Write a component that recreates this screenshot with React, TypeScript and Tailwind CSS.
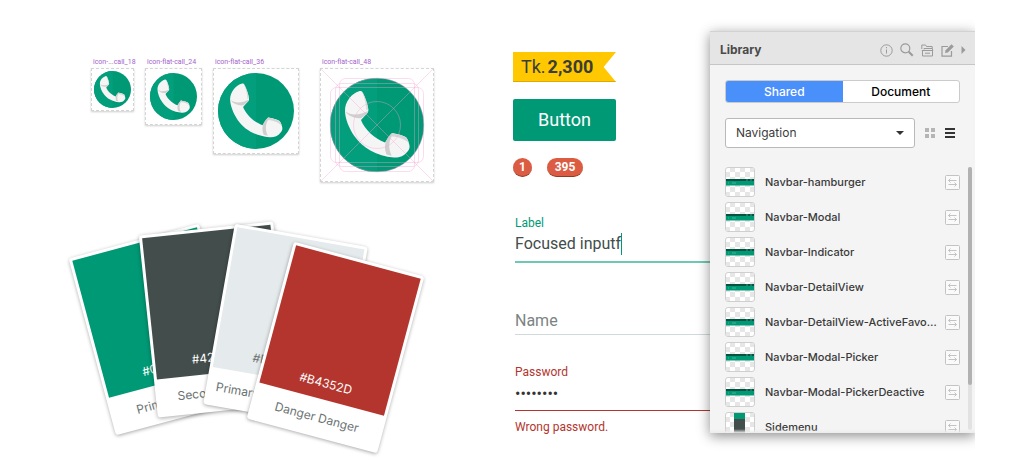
import { useState } from "react";
import clsx from "clsx";

type Artboard = {
  label: string;
  box: string;
  inset: string;
  guides?: boolean;
};

const ARTBOARDS: Artboard[] = [
  { label: "icon-...call_18", box: "w-[43px] h-[43px]", inset: "p-0.5" },
  { label: "icon-flat-call_24", box: "w-[57px] h-[57px]", inset: "p-1" },
  { label: "icon-flat-call_36", box: "w-[86px] h-[86px]", inset: "p-1" },
  { label: "icon-flat-call_48", box: "w-[114px] h-[114px]", inset: "p-[9px]", guides: true },
];

const SWATCHES = [
  { hex: "#009975", name: "Primary Green", place: "left-[22px] top-4 -rotate-15", fill: "bg-[#009975] text-white" },
  { hex: "#424D4C", name: "Secondary Grey", place: "left-20 top-1.5 -rotate-6", fill: "bg-[#424d4c] text-white" },
  { hex: "#E5EAED", name: "Primary Background", place: "left-[150px] top-3 rotate-10", fill: "bg-[#e5eaed] text-[#6b7372]" },
  { hex: "#B4352D", name: "Danger Danger", place: "left-[200px] top-[34px] rotate-15", fill: "bg-[#b4352d] text-white" },
];

const SYMBOLS = [
  "Navbar-hamburger",
  "Navbar-Modal",
  "Navbar-Indicator",
  "Navbar-DetailView",
  "Navbar-DetailView-ActiveFavorite",
  "Navbar-Modal-Picker",
  "Navbar-Modal-PickerDeactive",
  "Sidemenu",
];

function CallIcon() {
  return (
    <svg viewBox="0 0 94 94" className="block h-full w-full">
      <circle cx="47" cy="47" r="47" fill="#009975" />
      <path d="M47 0a47 47 0 0 0 0 94z" fill="#039f7c" />
      <g transform="translate(-10 -10)">
        <path
          d="M39 23.3c1.6-.8 3-.4 3.8 1.4C45.500 30 47.500 36 48.300 41.300c.3 2.200-.2 3.200-1.500 4.400L41 52c3.500 9 13 18.500 24 22.500l6-8.500c.8-1 1.500-1 2.600-.7 4.500.9 8.500 2 12 3.700 1.400.7 2.500 3.500 3.700 7.500.7 2.500.2 4.700-1.500 6.700-4 5-8.500 6.600-14 6.300-17-1.200-31-9.500-39.500-21.500-5.500-8-9-17.500-9.300-24.500-.2-5 1.200-9.200 4.500-13.500 3-3.500 6-5.500 9.500-6.700z"
          fill="#f5f5f5"
        />
        <path d="M25.400 43.500c3 1.800 6 3 9.500 3 4.700 0 8.700-1.500 13-3.500 0 1.200-.5 2-1.300 2.800L41.500 50c-5.700.8-12-1-16.100-6.500z" fill="#cfcfcf" />
        <path d="M42.800 24.700C45.500 30 47.500 36 48.300 41.300l-2 1c-.2-6-1.700-12-4-18z" fill="#dadada" />
        <path d="M71 66c.8-1 1.500-1 2.600-.7-4.600 6.500-6 13.200-2 22.400-2-.2-3.500-.6-5-1.200-3-7-2-14.500 4.400-20.500z" fill="#cfcfcf" />
        <path d="M72 65.500c5 .3 9.500 1.500 13.600 3.500 1.400.7 2.500 3 3.600 6.700-3-3.800-9-6.700-18-7.500z" fill="#d6d6d6" />
      </g>
    </svg>
  );
}

function Keylines() {
  return (
    <svg viewBox="0 0 112 112" className="absolute inset-0 h-full w-full" fill="none" stroke="#f5a3d3" strokeOpacity=".38" strokeWidth="1">
      <path d="M0 0l112 112M112 0L0 112" />
      <circle cx="56" cy="56" r="23.500" />
      <circle cx="56" cy="56" r="47" />
      <rect x="18.500" y="9.500" width="75" height="93" rx="6" />
      <rect x="9.500" y="18.500" width="93" height="75" rx="6" />
      <rect x="14.500" y="14.500" width="83" height="83" rx="6" />
    </svg>
  );
}

function SymbolThumb({ index }: { index: number }) {
  const cells = [];
  for (let y = 0; y < 6; y++) {
    for (let x = 0; x < 6; x++) {
      if ((x + y) % 2 === 1) cells.push(<rect key={`${x}-${y}`} x={x * 5 - 1} y={y * 5 - 1} width="5" height="5" fill="#e6e6e6" />);
    }
  }
  return (
    <span className="block h-[30px] w-[30px] shrink-0 overflow-hidden rounded-[3px] border border-[#cfcfcf] bg-white">
      <svg viewBox="0 0 28 28" className="block h-full w-full">
        {cells}
        {index === 7 ? (
          <>
            <rect x="8" width="11" height="6" fill="#009975" />
            <rect x="8" y="6" width="11" height="22" fill="#424d4c" />
          </>
        ) : (
          <>
            <rect y="11" width="28" height="2" fill="#02533f" />
            <rect y="13" width="28" height="4.500" fill="#009975" />
            <path d="M2 15h1M6 15h4" stroke="#5cc0a8" strokeOpacity=".7" />
            <path d="M20 12h2M24 12h2" stroke="#4c9a86" />
          </>
        )}
      </svg>
    </span>
  );
}

function SwapIcon() {
  return (
    <svg width="15" height="15" viewBox="0 0 15 15" fill="none" stroke="#c3c3c3" className="block">
      <rect x=".5" y=".5" width="14" height="14" rx="1" fill="#fafafa" />
      <path d="M11.500 5.500H3.500M5.500 3.500l-2 2 2 2M3.500 9.500h8M9.500 7.500l2 2-2 2" />
    </svg>
  );
}

function Toolbar() {
  return (
    <div className="flex items-center gap-[7px] text-[#9b9b9b]">
      <button aria-label="Info">
        <svg width="13" height="13" viewBox="0 0 13 13" fill="none" stroke="currentColor">
          <circle cx="6.500" cy="6.500" r="5.700" />
          <path d="M6.500 5.500v4M6.500 3v1.300" />
        </svg>
      </button>
      <button aria-label="Search">
        <svg width="14" height="14" viewBox="0 0 14 14" fill="none" stroke="currentColor">
          <circle cx="5.300" cy="5.300" r="4.500" strokeWidth="1.200" />
          <path d="M8.700 8.700l4 4" strokeWidth="2" />
        </svg>
      </button>
      <button aria-label="Folders">
        <svg width="13" height="13" viewBox="0 0 13 13" fill="none" stroke="currentColor">
          <path d="M.8 5V1h3.700l1 1.500h5.700V4M3 5.500V4.500h8.500v1.500M.8 6.500h11.400M1.500 6.500V12h10V6.500M4 9.200h5" />
        </svg>
      </button>
      <button aria-label="Edit">
        <svg width="13" height="13" viewBox="0 0 13 13" fill="none" stroke="currentColor">
          <path d="M7 2.500H1v9.700h9.500V7" strokeWidth="1.200" />
          <path d="M4 9l.6-2.800L10.500.3 12.800 2.600 6.800 8.400z" fill="currentColor" stroke="none" />
        </svg>
      </button>
      <button aria-label="More">
        <svg width="5" height="8" viewBox="0 0 5 8">
          <path d="M.5 0L4.500 4 .5 8z" fill="currentColor" />
        </svg>
      </button>
    </div>
  );
}

function LibraryPanel() {
  const [tab, setTab] = useState<"Shared" | "Document">("Shared");
  const [group, setGroup] = useState("Navigation");

  return (
    <aside className="mt-[31px] mr-[49px] w-[265px] shrink-0 self-start [clip-path:inset(-30px_0_-40px_-30px)]">
      <div className="bg-[#f4f4f4] shadow-[0_3px_12px_rgba(0,0,0,0.45)]">
        <header className="flex h-[34px] items-center justify-between border-y border-t-[#d2d2d2] border-b-[#c6c6c6] bg-[#e5e5e5] px-[9px] pt-1">
          <h2 className="pl-px text-xs font-bold text-[#4a4a4a]">Library</h2>
          <Toolbar />
        </header>

        <div className="px-[15px] pt-[15px]">
          <div className="flex h-[23px] overflow-hidden rounded-[3px] border border-[#cbcbcb] bg-white text-xs font-medium">
            {(["Shared", "Document"] as const).map((t) => (
              <button
                key={t}
                onClick={() => setTab(t)}
                className={clsx("flex-1", tab === t ? "bg-[#4a90fb] text-white" : "text-black")}
              >
                {t}
              </button>
            ))}
          </div>

          <div className="mt-[15px] flex items-center">
            <div className="relative flex-1">
              <select
                aria-label="Symbol group"
                value={group}
                onChange={(e) => setGroup(e.target.value)}
                className="block h-[30px] w-full appearance-none rounded-[3px] border border-[#b9b9b9] bg-white px-2.5 text-xs text-[#3c3c3c]"
              >
                <option>Navigation</option>
                <option>Buttons</option>
                <option>Icons</option>
              </select>
              <svg width="8" height="4" viewBox="0 0 8 4" className="pointer-events-none absolute top-[13px] right-[11px]">
                <path d="M0 0h8L4 4z" fill="#333" />
              </svg>
            </div>
            <button aria-label="Grid view" className="ml-2.5">
              <svg width="10" height="10" viewBox="0 0 10 10" fill="#b5b5b5">
                <path d="M0 0h4v4H0zM6 0h4v4H6zM0 6h4v4H0zM6 6h4v4H6z" />
              </svg>
            </button>
            <button aria-label="List view" className="mr-[5px] ml-2.5">
              <svg width="10" height="10" viewBox="0 0 10 10" fill="#333">
                <path d="M0 0h10v2H0zM0 4h10v2H0zM0 8h10v2H0z" />
              </svg>
            </button>
          </div>
        </div>

        <div className="relative mt-[19px] flex h-[266px] overflow-hidden pr-[3px] pl-[15px]">
          <ul className="flex min-w-0 flex-1 flex-col gap-[5px]">
            {SYMBOLS.map((name, i) => (
              <li key={name} className="flex items-center">
                <SymbolThumb index={i} />
                <span className="ml-2.5 min-w-0 flex-1 truncate text-[11px] font-medium text-[#3a3a3a]">{name}</span>
                <button aria-label={`Swap ${name}`} className="ml-2">
                  <SwapIcon />
                </button>
              </li>
            ))}
          </ul>
          <div className="ml-2 h-[263px] w-1 rounded-full bg-[#e2e2e2]">
            <div className="h-[218px] rounded-full bg-[#b1b1b1]" />
          </div>
          <div className="pointer-events-none absolute inset-x-0 bottom-0 h-1 bg-linear-to-b from-transparent to-[#ececec]" />
        </div>
      </div>
    </aside>
  );
}

export default function App() {
  const [text, setText] = useState("Focused inputf");
  const [name, setName] = useState("");
  const [password, setPassword] = useState("password");

  return (
    <main className="flex bg-white font-[Inter,sans-serif]">
      <section className="w-1/2 shrink-0">
        <div className="flex items-start pt-[57px] pl-[91px]">
          {ARTBOARDS.map((a) => (
            <figure key={a.label} className={a.guides ? "ml-[21px]" : "mr-[11px] nth-3:mr-0"}>
              <figcaption className="h-[11px] w-0 font-[Roboto,sans-serif] text-[7px] leading-[10px] whitespace-nowrap text-[#a45fcb]">
                <span className="pl-0.5">{a.label}</span>
              </figcaption>
              <div className={clsx("relative border border-dashed border-[#d4d4d4] bg-white shadow-[0_1px_2px_rgba(0,0,0,0.2)]", a.box, a.inset)}>
                <CallIcon />
                {a.guides && <Keylines />}
              </div>
            </figure>
          ))}
        </div>

        {/* swatch cards, fanned out */}
        <div className="relative mt-10 ml-[68px] h-[235px]">
          {SWATCHES.map((s) => (
            <div
              key={s.hex}
              className={clsx("absolute w-[135px] rounded-[3px] bg-white p-[3px] text-center shadow-[0_1px_4px_rgba(0,0,0,0.35)]", s.place)}
            >
              <div className={clsx("flex h-[142px] items-end justify-center pb-2 text-xs", s.fill)}>{s.hex}</div>
              <div className="h-[35px] text-xs leading-[38px] whitespace-nowrap text-[#6b7372]">{s.name}</div>
            </div>
          ))}
        </div>
      </section>

      <section className="min-w-0 flex-1 pt-[52px] pl-px font-[Roboto,sans-serif]">
        <div className="flex h-[30px] w-[103px] items-center border-b border-[#dfaa00] bg-[#ffc800] pl-2 text-lg whitespace-nowrap text-[#3a3d38] [clip-path:polygon(0_0,100%_0,88%_50%,100%_100%,0_100%)]">
          Tk.<b className="ml-0.5">2,300</b>
        </div>

        <button className="mt-[17px] block h-[42px] w-[103px] rounded-[2px] bg-[#009975] text-lg text-white">Button</button>

        <div className="mt-[17px] flex gap-[15px] text-xs font-bold text-white">
          <span className="flex h-[19px] w-[19px] items-center justify-center rounded-full border-b border-[#923b1e] bg-[#db5c43]">1</span>
          <span className="flex h-[19px] w-9 items-center justify-center rounded-full border-b border-[#923b1e] bg-[#db5c43]">395</span>
        </div>

        <form className="mt-[38px] pl-0.5">
          <label htmlFor="focused" className="block text-xs text-[#009975]">
            Label
          </label>
          <div className="flex h-8 border-b-2 border-[#6fc8b2] pt-px">
            <input
              id="focused"
              value={text}
              onChange={(e) => setText(e.target.value)}
              className="h-6 text-base text-[#424d4c] outline-none [field-sizing:content]"
            />
            <span className="mt-px h-[22px] w-px bg-[#009975]" />
          </div>

          <input
            aria-label="Name"
            placeholder="Name"
            value={name}
            onChange={(e) => setName(e.target.value)}
            className="mt-11 block h-7 w-full border-b border-[#cfdada] text-base outline-none placeholder:text-[#7b8482]"
          />

          <label htmlFor="password" className="mt-[29px] block text-xs text-[#b4352d]">
            Password
          </label>
          <div className="h-[31px] border-b border-b-[#b4352d]">
            <input
              id="password"
              type="password"
              value={password}
              onChange={(e) => setPassword(e.target.value)}
              className="block h-[26px] w-full text-base text-[#333] outline-none"
            />
          </div>
          <p className="mt-2 text-xs text-[#b4352d]">Wrong password.</p>
        </form>
      </section>

      <LibraryPanel />
    </main>
  );
}
